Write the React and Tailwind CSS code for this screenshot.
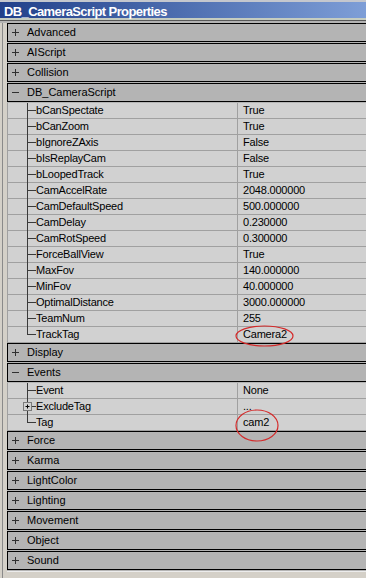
import React from "react";

const group1 = [
  ["bCanSpectate", "True"],
  ["bCanZoom", "True"],
  ["bIgnoreZAxis", "False"],
  ["bIsReplayCam", "False"],
  ["bLoopedTrack", "True"],
  ["CamAccelRate", "2048.000000"],
  ["CamDefaultSpeed", "500.000000"],
  ["CamDelay", "0.230000"],
  ["CamRotSpeed", "0.300000"],
  ["ForceBallView", "True"],
  ["MaxFov", "140.000000"],
  ["MinFov", "40.000000"],
  ["OptimalDistance", "3000.000000"],
  ["TeamNum", "255"],
  ["TrackTag", "Camera2"],
];

const group2 = [
  ["Event", "None"],
  ["ExcludeTag", "..."],
  ["Tag", "cam2"],
];

function Sign({ open }) {
  return (
    <svg width="7" height="7" className="ml-[4px] shrink-0 block">
      <line x1="0" y1="3.5" x2="7" y2="3.5" stroke="#303030" strokeWidth="1" />
      {!open && <line x1="3.5" y1="0" x2="3.5" y2="7" stroke="#303030" strokeWidth="1" />}
    </svg>
  );
}

function Cat({ label, open }) {
  return (
    <div className="h-[20px] flex flex-col bg-[#b4b4b4]">
      <div className="h-[19px] border border-r-0 border-black flex items-center">
        <Sign open={open} />
        <span className="ml-[8px] text-[11px] leading-none text-black">{label}</span>
      </div>
    </div>
  );
}

function Tree({ last, expander }) {
  return (
    <svg width="29" height="16" className="shrink-0 block">
      <line x1="0.5" y1="0" x2="0.5" y2="16" stroke="#a0a0a0" />
      <line x1="0" y1="15.5" x2="29" y2="15.5" stroke="#a0a0a0" />
      <line x1="20.5" y1="0" x2="20.5" y2={last ? 8 : 16} stroke="#3a3a3a" />
      <line x1="20.5" y1="7.5" x2="29" y2="7.5" stroke="#3a3a3a" />
      {expander && (
        <>
          <rect x="16.5" y="3.5" width="8" height="8" fill="#d1d1d1" stroke="#7a7a7a" />
          <line x1="18.5" y1="7.5" x2="22.5" y2="7.5" stroke="#000" />
          <line x1="20.5" y1="5.5" x2="20.5" y2="9.5" stroke="#000" />
        </>
      )}
    </svg>
  );
}

function Sub({ name, value, last, expander }) {
  return (
    <div className="h-[16px] flex bg-[#d1d1d1] text-[11px] text-black tracking-[-0.2px]">
      <Tree last={last} expander={expander} />
      <div className="w-[201px] shrink-0 border-b border-[#a0a0a0] flex items-center leading-none">
        {name}
      </div>
      <div className="flex-1 border-b border-l border-[#a0a0a0] flex items-center pl-[5px] leading-none">
        {value}
      </div>
    </div>
  );
}

export default function App() {
  return (
    <div className="relative w-[366px] h-[578px] overflow-hidden bg-[#d4d0c8] font-['Liberation_Sans',Arial,sans-serif]">
      <div className="h-[2px] bg-[#c4c7ce]" />
      <div className="h-[16px] bg-linear-to-r from-[#22408a] to-[#7e9ed7] pl-[4px] pt-[3px]">
        <span className="block text-[13px] leading-[13px] font-bold text-white tracking-[-0.6px]">
          DB_CameraScript Properties
        </span>
      </div>
      <div className="h-[2px] bg-[#c5ccc0]" />
      <div className="h-px bg-[#5a5a5a]" />
      <div className="h-[2px] bg-[#b4b4b4]" />

      <div className="flex">
        <div className="w-[7px] shrink-0 flex">
          <div className="w-[2px]" />
          <div className="w-px bg-[#8a8a8a]" />
        </div>
        <div className="flex-1 flex flex-col">
          <Cat label="Advanced" />
          <Cat label="AIScript" />
          <Cat label="Collision" />
          <Cat label="DB_CameraScript" open />
          {group1.map(([n, v], i) => (
            <Sub key={n} name={n} value={v} last={i === group1.length - 1} />
          ))}
          <Cat label="Display" />
          <Cat label="Events" open />
          {group2.map(([n, v], i) => (
            <Sub key={n} name={n} value={v} last={i === group2.length - 1} expander={n === "ExcludeTag"} />
          ))}
          <Cat label="Force" />
          <Cat label="Karma" />
          <Cat label="LightColor" />
          <Cat label="Lighting" />
          <Cat label="Movement" />
          <Cat label="Object" />
          <Cat label="Sound" />
          <div className="h-px bg-[#ececec]" />
          <div className="h-[10px]" />
        </div>
      </div>

      <svg
        width="366"
        height="578"
        className="absolute left-0 top-0 pointer-events-none"
      >
        <ellipse cx="264.5" cy="336" rx="28.5" ry="10" fill="none" stroke="#d42a2a" strokeWidth="1.2" />
        <ellipse cx="257" cy="425.5" rx="21" ry="15.5" fill="none" stroke="#d42a2a" strokeWidth="1.2" />
      </svg>
    </div>
  );
}
